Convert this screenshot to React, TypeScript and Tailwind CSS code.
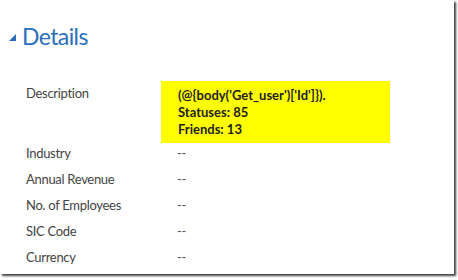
const rows = [
  { label: "Industry", value: "--" },
  { label: "Annual Revenue", value: "--" },
  { label: "No. of Employees", value: "--" },
  { label: "SIC Code", value: "--" },
  { label: "Currency", value: "--" },
];

export default function App() {
  return (
    <div className="w-[458px] h-[280px] bg-white" style={{ fontFamily: "Lato, 'Open Sans', sans-serif" }}>
      <div className="w-[454px] h-[274px] bg-white shadow-[2px_2px_2px_rgba(0,0,0,0.75)]">
        {/* Header */}
        <div className="flex items-center pt-[20px] pl-[9px]">
          <svg width="7" height="7" viewBox="0 0 7 7" className="mt-[3px]">
            <polygon points="7,0 7,7 0,7" fill="#2a6ebb" />
          </svg>
          <h1 className="ml-[6px] text-[23px] leading-[32px] tracking-[-0.6px] text-[#2a6ebb]">Details</h1>
        </div>

        {/* Description */}
        <div className="flex mt-[29px] pl-[26px]">
          <div className="w-[135px] pt-[3px] text-[13px] leading-[18px] tracking-[-0.3px] text-[#444]">Description</div>
          <div className="w-[229px] h-[62px] bg-[#ffff00] pl-[17px] pt-[6px] text-[13px] leading-[17px] font-bold text-[#222]">
            <div>(@{"{"}body('Get_user')['Id']{"}"}).</div>
            <div>Statuses: 85</div>
            <div>Friends: 13</div>
          </div>
        </div>

        {/* Other fields */}
        <div className="flex flex-col pl-[26px] -mt-[2px]">
          {rows.map((r) => (
            <div key={r.label} className="flex h-[26px] items-center text-[13px] tracking-[-0.3px] text-[#444]">
              <div className="w-[151px]">{r.label}</div>
              <div className="text-[#555]">{r.value}</div>
            </div>
          ))}
        </div>
      </div>
    </div>
  );
}
